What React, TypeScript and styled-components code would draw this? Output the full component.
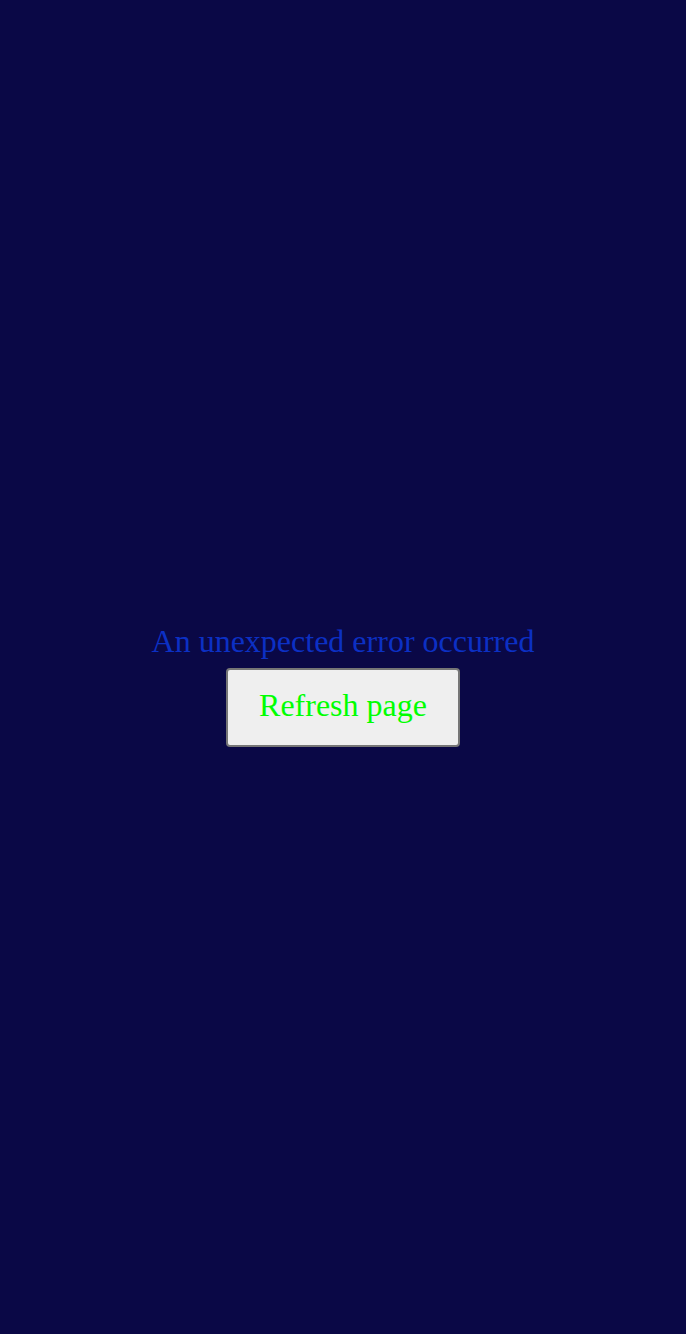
import React from "react";
import styled, { createGlobalStyle } from "styled-components";

const Global = createGlobalStyle`
  html, body { margin: 0; padding: 0; background: #0a0846; }
  body { font-family: "Liberation Serif", "Times New Roman", serif; }
`;

const Page = styled.div`
  min-height: 100vh;
  display: flex;
  flex-direction: column;
  align-items: center;
  justify-content: center;
  gap: 8px;
  padding-top: 36px;
  box-sizing: border-box;
`;

const Message = styled.div`
  color: #0c30c4;
  font-size: 32px;
`;

const RefreshButton = styled.button`
  font-family: "Liberation Serif", "Times New Roman", serif;
  font-size: 32px;
  color: #00ff00;
  background: #efefef;
  border: 2px solid #767676;
  border-radius: 4px;
  padding: 17px 31px 21px;
  cursor: pointer;
`;

export default function App() {
  return (
    <>
      <Global />
      <Page>
        <Message>An unexpected error occurred</Message>
        <RefreshButton onClick={() => window.location.reload()}>Refresh page</RefreshButton>
      </Page>
    </>
  );
}
